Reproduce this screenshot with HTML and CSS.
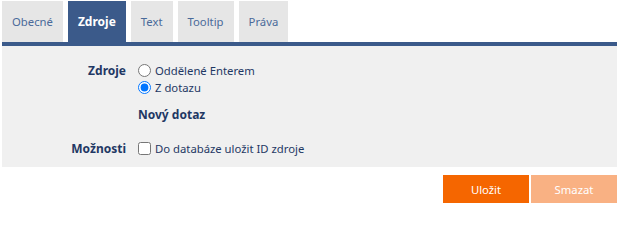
FILE: index.html
```html
<!DOCTYPE html>
<html lang="cs">
<head>
<meta charset="utf-8">
<title>Zdroje</title>
<link rel="stylesheet" href="styles.css">
</head>
<body>
<div class="tabs">
  <a class="tab">Obecné</a>
  <a class="tab active">Zdroje</a>
  <a class="tab">Text</a>
  <a class="tab">Tooltip</a>
  <a class="tab">Práva</a>
</div>
<div class="panel">
  <div class="form-row">
    <div class="label">Zdroje</div>
    <div class="controls">
      <label class="opt"><input type="radio" name="src">Oddělené Enterem</label>
      <label class="opt"><input type="radio" name="src" checked>Z dotazu</label>
      <div class="subhead">Nový dotaz</div>
    </div>
  </div>
  <div class="form-row options">
    <div class="label">Možnosti</div>
    <div class="controls">
      <label class="opt"><input type="checkbox">Do databáze uložit ID zdroje</label>
    </div>
  </div>
</div>
<div class="actions">
  <button class="btn primary">Uložit</button>
  <button class="btn secondary">Smazat</button>
</div>
</body>
</html>
```

FILE: styles.css
```css
html, body {
  margin: 0;
  padding: 0;
  background: #ffffff;
}
body {
  font-family: "Noto Sans", "DejaVu Sans", sans-serif;
  font-size: 11.3px;
  color: #1f3864;
}
.tabs {
  display: flex;
  gap: 5px;
  padding: 1px 0 0 2px;
}
.tab {
  display: block;
  height: 41px;
  line-height: 41px;
  padding: 0 10px;
  background: #e6e6e6;
  color: #4a6a9a;
  text-decoration: none;
}
.tab.active {
  background: #3b5a8a;
  color: #ffffff;
  font-weight: bold;
  font-size: 12px;
}
.panel {
  margin: 0 1px 0 2px;
  border-top: 4px solid #3b5a8a;
  background: #f0f0f0;
  padding: 16px 0 10px 0;
}
.form-row {
  display: grid;
  grid-template-columns: 124px 1fr;
  column-gap: 12px;
}
.form-row.options {
  margin-top: 17px;
}
.label {
  text-align: right;
  font-weight: bold;
  font-size: 12px;
  line-height: 17px;
  color: #1f3864;
}
.controls {
  display: flex;
  flex-direction: column;
}
.opt {
  display: flex;
  align-items: center;
  gap: 4px;
  height: 17px;
  color: #1f3864;
}
.opt input {
  margin: 0;
  width: 13px;
  height: 13px;
}
.subhead {
  margin-top: 10px;
  line-height: 17px;
  font-weight: bold;
  font-size: 12px;
  color: #1f3864;
}
.actions {
  display: flex;
  justify-content: flex-end;
  gap: 2px;
  margin: 8px 1px 0 0;
}
.btn {
  width: 86px;
  height: 28px;
  border: none;
  font-family: inherit;
  font-size: 11.3px;
  color: #ffffff;
  padding: 0;
}
.btn.primary {
  background: #f56600;
}
.btn.secondary {
  background: #f9b183;
}
```
